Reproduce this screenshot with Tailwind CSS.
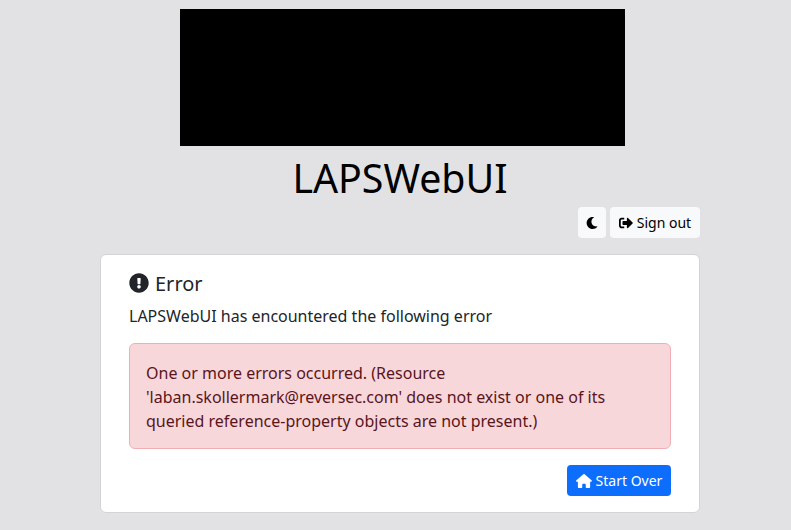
<!DOCTYPE html>
<html lang="en">
  <head>
    <meta charset="UTF-8" />
    <meta name="viewport" content="width=device-width, initial-scale=1.0" />
    <script src="https://cdn.jsdelivr.net/npm/@tailwindcss/browser@4"></script>
    <title>LAPSWebUI</title>
  </head>
  <body class="bg-[#e2e2e5] font-['Noto_Sans',sans-serif] text-[#212529] h-[530px] overflow-hidden">
    <div class="w-[600px] ml-[100px] pt-[9px]">
      <div class="flex justify-center pl-[5px]">
        <div class="w-[445px] h-[137px] bg-black"></div>
      </div>
      <h1 class="text-[39.3px] leading-[48px] text-black text-center mt-2 font-normal">LAPSWebUI</h1>
      <div class="flex justify-end gap-1 mt-[5px]">
        <button class="h-[31px] w-[28px] bg-[#f8f9fa] rounded flex items-center justify-center text-black">
          <svg viewBox="0 0 512 512" class="w-[12px] h-[12px]" fill="currentColor"><path d="M283.200 512c79 0 151.100-35.900 198.900-94.800 7.100-8.700-.6-21.400-11.600-19.300-124.200 23.700-238.300-71.600-238.300-197 0-72.200 38.700-138.600 101.500-174.400 9.700-5.500 7.300-20.200-3.700-22.200A258.200 258.200 0 0 0 283.200 0c-141.300 0-256 114.500-256 256 0 141.300 114.500 256 256 256z"/></svg>
        </button>
        <button class="h-[31px] w-[90px] bg-[#f8f9fa] rounded flex items-center justify-center gap-1 text-sm text-black">
          <svg viewBox="0 0 512 512" class="w-[14px] h-[14px]" fill="currentColor"><path d="M497 273L329 441c-15 15-41 4.500-41-17v-96H152c-13.300 0-24-10.700-24-24v-96c0-13.300 10.700-24 24-24h136V88c0-21.400 25.900-32 41-17l168 168c9.300 9.400 9.300 24.600 0 34zM192 436v-40c0-6.600-5.400-12-12-12H96c-17.700 0-32-14.300-32-32V160c0-17.700 14.300-32 32-32h84c6.600 0 12-5.400 12-12V76c0-6.600-5.400-12-12-12H96c-53 0-96 43-96 96v192c0 53 43 96 96 96h84c6.600 0 12-5.400 12-12z"/></svg>
          <span>Sign out</span>
        </button>
      </div>
      <div class="mt-4 bg-white border border-[#d3d4d6] rounded-md px-7 pt-4 pb-4 h-[259px]">
        <h5 class="flex items-center h-6 gap-[6px] text-xl leading-6 font-normal">
          <svg viewBox="0 0 512 512" class="w-5 h-5" fill="currentColor"><path d="M504 256c0 137-111 248-248 248S8 393 8 256C8 119 119 8 256 8s248 111 248 248zm-248 50c-25.400 0-46 20.600-46 46s20.600 46 46 46 46-20.600 46-46-20.600-46-46-46zm-43.700-165.300l7.400 136c.3 6.400 5.600 11.300 12 11.300h48.500c6.400 0 11.600-5 12-11.300l7.400-136c.3-6.900-5.100-12.700-12-12.700h-63.400c-6.900 0-12.300 5.800-12 12.700z"/></svg>
          <span class="mt-[2px]">Error</span>
        </h5>
        <p class="text-base leading-6 mt-[9px]">LAPSWebUI has encountered the following error</p>
        <div class="mt-[15px] bg-[#f8d7da] border border-[#f1aeb5] text-[#58151c] rounded-md px-4 pt-[17px] pb-[15px] text-base leading-6">
          One or more errors occurred. (Resource 'laban.skollermark@reversec.com' does not exist or one of its queried reference-property objects are not present.)
        </div>
        <div class="flex justify-end mt-4">
          <button class="h-[31px] w-[104px] bg-[#0d6efd] text-white rounded flex items-center justify-center gap-1 text-sm">
            <svg viewBox="0 0 576 512" class="w-4 h-[14px]" fill="currentColor"><path d="M575.800 255.500c0 18-15 32.100-32 32.100l-32 0 .7 160.200c0 2.700-.2 5.400-.5 8.100l0 16.200c0 22.100-17.900 40-40 40l-16 0c-1.100 0-2.200 0-3.300-.1-1.400 .1-2.800 .1-4.200 .1L416 512l-24 0c-22.100 0-40-17.900-40-40l0-24 0-64c0-17.700-14.300-32-32-32l-64 0c-17.700 0-32 14.300-32 32l0 64 0 24c0 22.100-17.900 40-40 40l-24 0-31.900 0c-1.500 0-3-.1-4.500-.2-1.200 .1-2.400 .2-3.600 .2l-16 0c-22.100 0-40-17.900-40-40l0-112c0-.9 0-1.900 .1-2.800l0-69.700-32 0c-18 0-32-14-32-32.100 0-9 3-17 10-24L266.400 8c7-7 15-8 22-8s15 2 21 7L564.800 231.500c8 7 12 15 11 24z"/></svg>
            <span>Start Over</span>
          </button>
        </div>
      </div>
    </div>
  </body>
</html>
